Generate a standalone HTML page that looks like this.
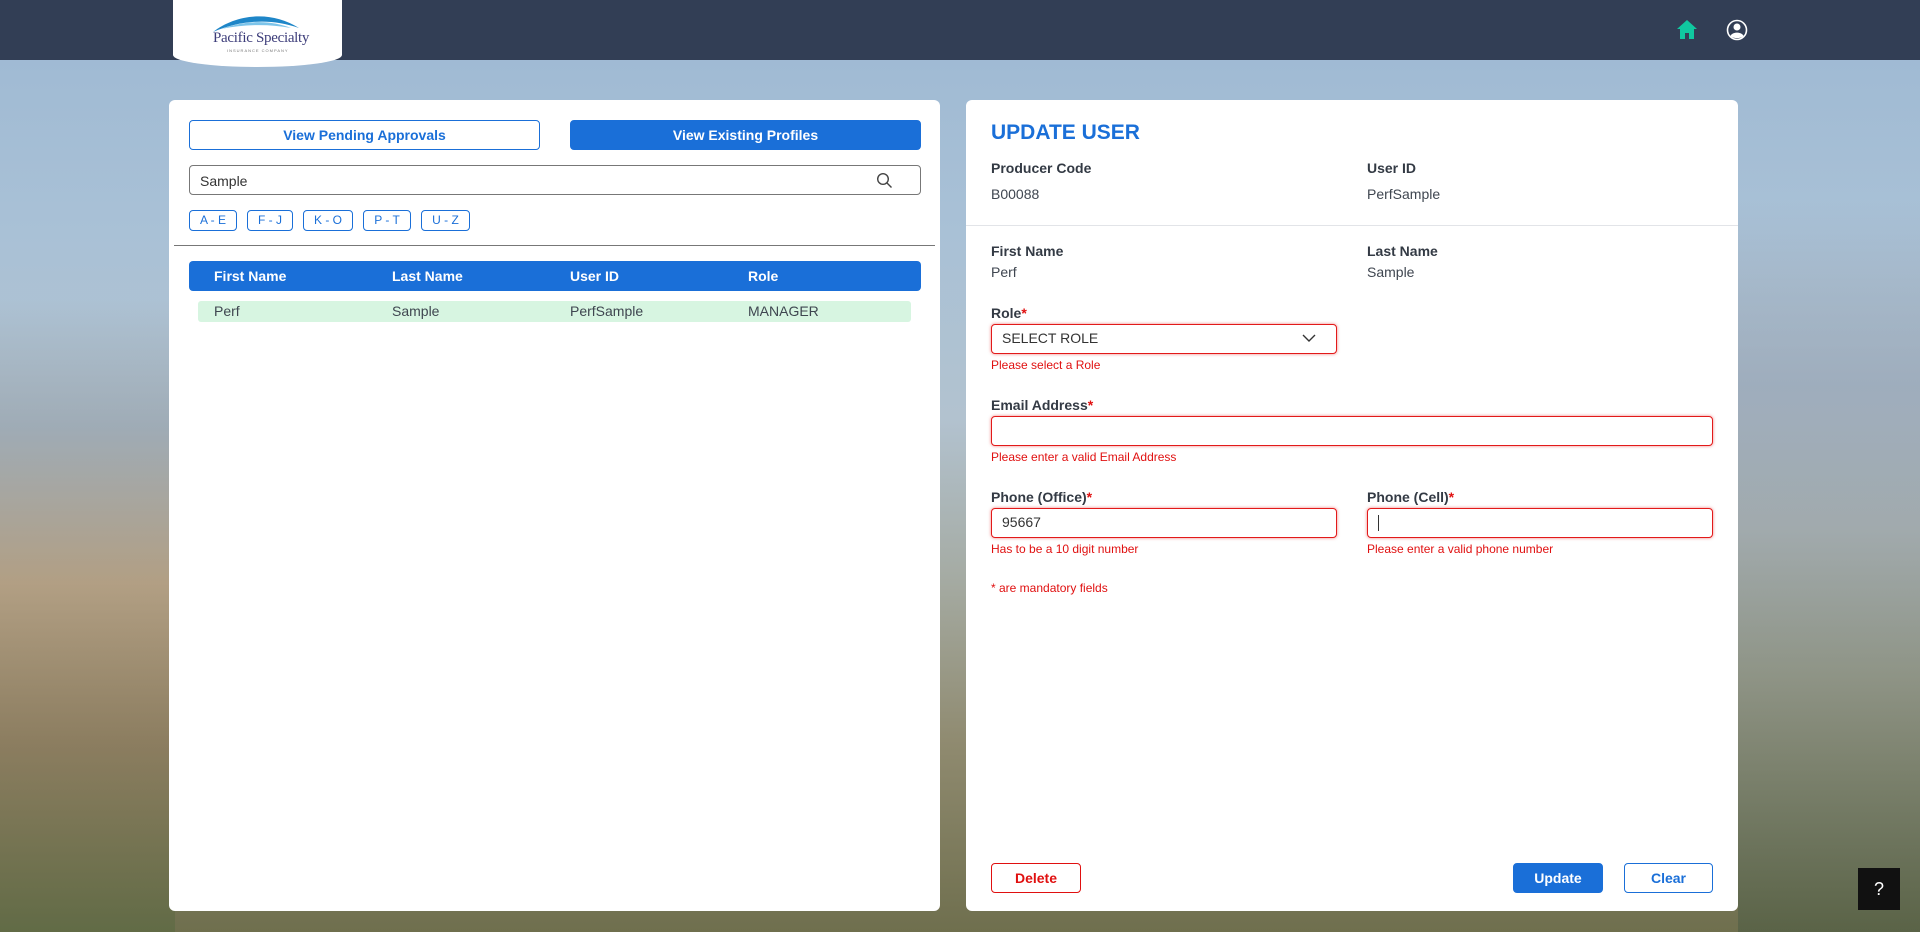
<!DOCTYPE html>
<html><head><style>
*{box-sizing:border-box;margin:0;padding:0}
body{width:1920px;height:932px;overflow:hidden;font-family:"Liberation Sans",sans-serif;position:relative;
background:linear-gradient(180deg,#9db8d3 0%,#a9c1d6 25%,#b2c2cf 45%,#a5aba3 62%,#8f8a6f 80%,#6f6f4e 100%);}
.bgl{position:absolute;left:0;top:300px;width:175px;height:632px;background:linear-gradient(180deg,rgba(126,149,173,0),#9aa6b0 20%,#b59c7c 45%,#8b7a5c 70%,#5e6a44);opacity:.8}
.bgr{position:absolute;left:1738px;top:200px;width:182px;height:732px;background:linear-gradient(180deg,rgba(138,160,182,0),#9aa8b8 25%,#9fa8ac 45%,#8c9386 65%,#556045);opacity:.8}
.hdr{position:absolute;left:0;top:0;width:1920px;height:60px;background:#323e55}
.logo{position:absolute;left:173px;top:0;width:169px;height:67px;background:#fff;border-radius:0 0 50% 50%/0 0 12px 12px}
.panel{position:absolute;background:#fff;border-radius:6px}
.a{position:absolute}
.btn{position:absolute;border:1px solid #1a6fd8;border-radius:4px;font-weight:bold;font-size:14px;color:#1a6fd8;text-align:center;background:#fff}
.lbl{position:absolute;font-size:14px;font-weight:bold;color:#333a44}
.val{position:absolute;font-size:14px;color:#3f4650}
.err{position:absolute;font-size:12px;color:#e01010}
.inp{position:absolute;border:1.5px solid #e21a1a;border-radius:4px;box-shadow:0 0 3px rgba(230,0,0,.5);background:#fff;font-size:14px;color:#333;padding-left:10px}
.st{color:#e01010}
.lt{position:absolute;height:21px;border:1px solid #1a6fd8;border-radius:4px;font-size:12px;color:#1a6fd8;text-align:center;line-height:19px}
</style></head><body>
<div class="bgl"></div><div class="bgr"></div>
<div class="hdr"></div>
<div class="logo">
<svg class="a" style="left:38px;top:12px" width="92" height="22" viewBox="0 0 92 22"><path d="M2 20 C25 2,60 -2,88 16 C60 6,30 8,2 20Z" fill="#1e86c8"/><path d="M10 17 C35 8,60 8,80 16 C58 12,35 12,10 17Z" fill="#7cc4ea"/></svg>
<div class="a" style="left:40px;top:30px;font-family:'Liberation Serif',serif;font-size:15px;color:#3d3d7a;letter-spacing:-.3px">Pacific Specialty</div>
<div class="a" style="left:54px;top:48px;font-size:4px;color:#777;letter-spacing:1px">INSURANCE COMPANY</div>
</div>
<svg class="a" style="left:1676px;top:19px" width="22" height="21" viewBox="0 0 22 21"><path d="M11 1 L1 10 H4 V20 H9 V14 H13 V20 H18 V10 H21Z" fill="#10c8a0"/></svg>
<svg class="a" style="left:1726px;top:19px" width="22" height="22" viewBox="0 0 22 22"><circle cx="11" cy="11" r="9.5" fill="none" stroke="#fff" stroke-width="1.6"/><circle cx="11" cy="8" r="3.5" fill="#fff"/><path d="M4.5 17 C6 12.5,16 12.5,17.5 17 C15 19.8,7 19.8,4.5 17Z" fill="#fff"/></svg>

<div class="panel" style="left:169px;top:100px;width:771px;height:811px">
<div class="btn" style="left:20px;top:20px;width:351px;height:30px;line-height:28px">View Pending Approvals</div>
<div class="btn" style="left:401px;top:20px;width:351px;height:30px;line-height:28px;background:#1a6fd8;color:#fff">View Existing Profiles</div>
<div class="a" style="left:20px;top:65px;width:732px;height:30px;border:1px solid #777;border-radius:4px;font-size:14px;color:#333;padding:7px 10px">Sample</div>
<svg class="a" style="left:707px;top:72px" width="17" height="17" viewBox="0 0 17 17"><circle cx="7" cy="7" r="5.3" fill="none" stroke="#444" stroke-width="1.4"/><path d="M11 11 L15.5 15.5" stroke="#444" stroke-width="1.4"/></svg>
<div class="lt" style="left:20px;top:110px;width:48px">A - E</div>
<div class="lt" style="left:78px;top:110px;width:46px">F - J</div>
<div class="lt" style="left:134px;top:110px;width:50px">K - O</div>
<div class="lt" style="left:194px;top:110px;width:48px">P - T</div>
<div class="lt" style="left:252px;top:110px;width:49px">U - Z</div>
<div class="a" style="left:5px;top:145px;width:761px;height:1px;background:#777"></div>
<div class="a" style="left:20px;top:161px;width:732px;height:30px;background:#1a6fd8;border-radius:4px;color:#fff;font-weight:bold;font-size:14px;line-height:30px">
<span class="a" style="left:25px">First Name</span><span class="a" style="left:203px">Last Name</span><span class="a" style="left:381px">User ID</span><span class="a" style="left:559px">Role</span></div>
<div class="a" style="left:29px;top:201px;width:713px;height:21px;background:#d7f5e1;border-radius:3px;color:#3f4650;font-size:14px;line-height:21px">
<span class="a" style="left:16px">Perf</span><span class="a" style="left:194px">Sample</span><span class="a" style="left:372px">PerfSample</span><span class="a" style="left:550px">MANAGER</span></div>
</div>

<div class="panel" style="left:966px;top:100px;width:772px;height:811px">
<div class="a" style="left:25px;top:21px;font-size:21px;font-weight:bold;color:#1a6fd8">UPDATE USER</div>
<div class="lbl" style="left:25px;top:60px">Producer Code</div>
<div class="lbl" style="left:401px;top:60px">User ID</div>
<div class="val" style="left:25px;top:86px">B00088</div>
<div class="val" style="left:401px;top:86px">PerfSample</div>
<div class="a" style="left:0;top:125px;width:772px;height:1px;background:#e2e4e8"></div>
<div class="lbl" style="left:25px;top:143px">First Name</div>
<div class="lbl" style="left:401px;top:143px">Last Name</div>
<div class="val" style="left:25px;top:164px">Perf</div>
<div class="val" style="left:401px;top:164px">Sample</div>
<div class="lbl" style="left:25px;top:205px">Role<span class="st">*</span></div>
<div class="inp" style="left:25px;top:224px;width:346px;height:30px;line-height:27px">SELECT ROLE
<svg class="a" style="left:310px;top:9px" width="14" height="9" viewBox="0 0 14 9"><path d="M1 1 L7 7 L13 1" fill="none" stroke="#333" stroke-width="1.4"/></svg></div>
<div class="err" style="left:25px;top:258px">Please select a Role</div>
<div class="lbl" style="left:25px;top:297px">Email Address<span class="st">*</span></div>
<div class="inp" style="left:25px;top:316px;width:722px;height:30px"></div>
<div class="err" style="left:25px;top:350px">Please enter a valid Email Address</div>
<div class="lbl" style="left:25px;top:389px">Phone (Office)<span class="st">*</span></div>
<div class="lbl" style="left:401px;top:389px">Phone (Cell)<span class="st">*</span></div>
<div class="inp" style="left:25px;top:408px;width:346px;height:30px;line-height:27px">95667</div>
<div class="inp" style="left:401px;top:408px;width:346px;height:30px"><div class="a" style="left:10px;top:6px;width:1px;height:16px;background:#333"></div></div>
<div class="err" style="left:25px;top:442px">Has to be a 10 digit number</div>
<div class="err" style="left:401px;top:442px">Please enter a valid phone number</div>
<div class="err" style="left:25px;top:481px">* are mandatory fields</div>
<div class="btn" style="left:25px;top:763px;width:90px;height:30px;line-height:28px;border-color:#e01010;color:#e01010">Delete</div>
<div class="btn" style="left:547px;top:763px;width:90px;height:30px;line-height:28px;background:#1a6fd8;color:#fff">Update</div>
<div class="btn" style="left:658px;top:763px;width:89px;height:30px;line-height:28px">Clear</div>
</div>
<div class="a" style="left:1858px;top:868px;width:42px;height:42px;background:#111;color:#fff;font-size:18px;text-align:center;line-height:42px">?</div>
</body></html>
